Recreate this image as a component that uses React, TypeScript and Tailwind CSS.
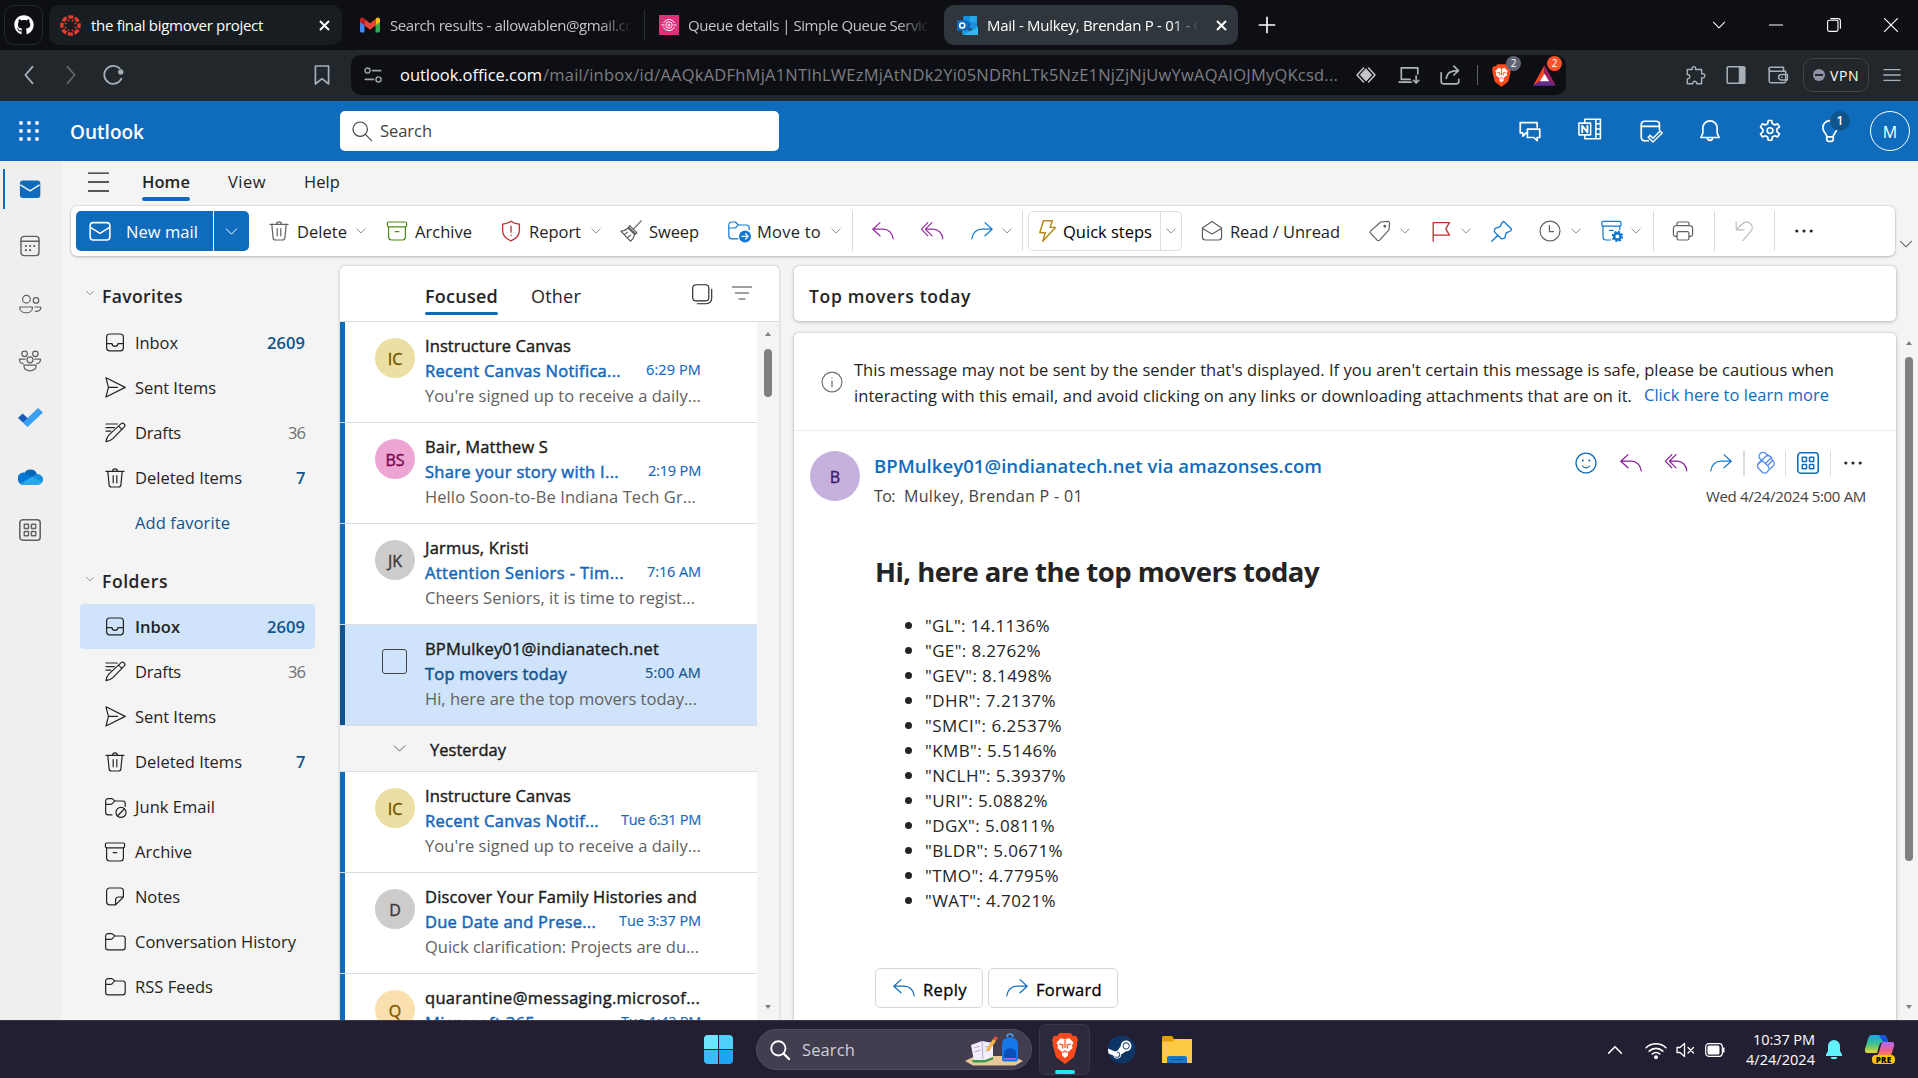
import React, { useLayoutEffect, useRef } from "react";
import { FaGithub, FaSteam } from "react-icons/fa";

/* Single-line label that spreads its letters over the width of its box. */
function T({ className = "", children }: { className?: string; children: string }) {
  const box = useRef<HTMLDivElement>(null);
  const inner = useRef<HTMLSpanElement>(null);
  useLayoutEffect(() => {
    const b = box.current;
    const s = inner.current;
    if (!b || !s) return;
    s.style.letterSpacing = "0px";
    const natural = s.getBoundingClientRect().width;
    s.style.letterSpacing = `${(b.clientWidth - natural) / children.length}px`;
  }, [children]);
  return (
    <div ref={box} className={`shrink-0 whitespace-nowrap ${className}`}>
      <span ref={inner} className="whitespace-pre">{children}</span>
    </div>
  );
}

type P = { className?: string; children?: React.ReactNode };

/* 20-unit line icon */
function I({ className = "size-6", children }: P) {
  return (
    <svg viewBox="0 0 20 20" fill="none" stroke="currentColor" strokeWidth="1" strokeLinecap="round" strokeLinejoin="round" className={`shrink-0 ${className}`}>
      {children}
    </svg>
  );
}

const Chev = ({ className = "size-3.5 text-[#707070]" }: P) => (
  <I className={className}><path d="M3 6.5 10 13.5 17 6.5" strokeWidth="1.3" /></I>
);
const Trash = ({ className }: P) => (
  <I className={className}><path d="M2.5 4.5h15M4 4.5l1.1 11.2a2 2 0 0 0 2 1.8h5.8a2 2 0 0 0 2-1.8L16 4.5M8 4.4a2 2 0 0 1 4 0M8.5 8v6M11.500 8v6" /></I>
);
const Archive = ({ className }: P) => (
  <I className={className}><rect x="2" y="2.500" width="16" height="4" rx="1" /><path d="M3 6.500v8.500a2.500 2.500 0 0 0 2.500 2.500h9a2.500 2.500 0 0 0 2.500-2.500V6.500M8.500 10.500h3" /></I>
);
const Inbox = ({ className }: P) => (
  <I className={className}><rect x="3" y="2.500" width="14" height="14" rx="2.500" /><path d="M3 10.500h4.500c0 1.400 1 2.300 2.500 2.300s2.500-.9 2.500-2.300H17" /></I>
);
const Send = ({ className }: P) => (
  <I className={className}><path d="M2.500 1.500 18.500 9.500 2.500 17.500 4.500 9.500ZM4.500 9.500H12" /></I>
);
const Drafts = ({ className }: P) => (
  <I className={className}><path d="M2.500 2.500h9.500M2.500 5.500h7M2.500 8.500h4M14.900 2.400a1.900 1.900 0 0 1 2.700 2.700L8 14.900c-1.500 1.400-3.300 1.900-5.500 2.300.4-2.200 1-4 2.300-5.400ZM13 4.300l2.700 2.700" /></I>
);
const Folder = ({ className }: P) => (
  <I className={className}><path d="M2.200 5a2 2 0 0 1 2-2H7.500L10 5H16.500a2 2 0 0 1 2 2v7.500a2 2 0 0 1-2 2H4.200a2 2 0 0 1-2-2ZM2.200 7.800H6.500C8.300 7.800 8.300 5.500 10 5" /></I>
);
const Junk = ({ className }: P) => (
  <I className={className}><path d="M7.500 16.500H4.200a2 2 0 0 1-2-2V5a2 2 0 0 1 2-2H7.500L10 5H16.500a2 2 0 0 1 2 2V9.500M2.200 7.800H6.500C8.300 7.800 8.300 5.500 10 5" /><circle cx="15" cy="14.500" r="4.200" /><path d="m12.200 17.300 5.600-5.600" /></I>
);
const Note = ({ className }: P) => (
  <I className={className}><path d="M17 10V5a2.500 2.500 0 0 0-2.500-2.500h-9A2.500 2.500 0 0 0 3 5v9a2.500 2.500 0 0 0 2.500 2.500H10.500L17 10h-4a2.500 2.500 0 0 0-2.500 2.500v4" /></I>
);
const ReplyI = ({ className }: P) => (
  <I className={className}><path d="M7.500 3 1.500 8.500l6 5.500M1.500 8.500H10c4.500 0 8 3 8.500 8" /></I>
);
const ReplyAll = ({ className }: P) => (
  <I className={className}><path d="M6.500 3 1.200 8.500l5.300 5.500M10 3 4.500 8.500 10 14M4.500 8.500H11c4 0 7.500 3 8 8" /></I>
);
const ForwardI = ({ className }: P) => (
  <I className={className}><path d="m12.500 3 6 5.500-6 5.500M18.500 8.500H10c-4.500 0-8 3-8.500 8" /></I>
);
const Apps = ({ className }: P) => (
  <I className={className}>
    <rect x="1.500" y="1.500" width="17" height="17" rx="2.500" strokeWidth="1.300" />
    {[[5.2, 5.2], [11.2, 5.2], [5.2, 11.200], [11.2, 11.2]].map(([x, y]) => (
      <rect key={`${x}-${y}`} x={x} y={y} width="3.600" height="3.600" rx=".5" strokeWidth="1.200" />
    ))}
  </I>
);
const Dots = ({ className }: P) => (
  <I className={className}><g fill="currentColor" stroke="none"><circle cx="4" cy="10" r="1.300" /><circle cx="10" cy="10" r="1.300" /><circle cx="16" cy="10" r="1.300" /></g></I>
);
const Cross = ({ className }: P) => (
  <I className={className}><path d="m4 4 12 12M16 4 4 16" strokeWidth="2.600" strokeLinecap="butt" /></I>
);
const Brave = ({ className }: P) => (
  <svg viewBox="0 0 26 31" className={`shrink-0 ${className}`}>
    <path d="M7.500 0h11l2.500 3 3-.3L26 7l-1 3 .3 2L22 24l-7 5.500-2 1.500-2-1.500L4 24 .7 12 1 10 0 7l2-4.300 3 .3Z" fill="#fb4a1e" />
    <path d="m13 6.500 4-1.500 4.500 4.500-1.500 3 .5 2.500-4.500 4v3.500L13 25l-3-2.500V19l-4.500-4 .5-2.500L4.500 9.500 9 5Z" fill="#fff" />
    <path d="m7 11 4 1-.5 3.500M19 11l-4 1 .5 3.500M10.500 19.500 13 18l2.500 1.500M13 7v8" stroke="#fb4a1e" fill="none" strokeWidth="1.200" />
  </svg>
);

const Sep = ({ className = "" }: P) => <div className={`h-10 w-px shrink-0 bg-[#d9d9d9] ${className}`} />;

function BrowserTabs() {
  return (
    <div className="flex h-[50px] shrink-0 items-center bg-[#0d0f14] pl-1 text-[15px] text-white">
      <div className="flex h-10 w-[39px] items-center justify-center rounded-[10px] border border-[#24282c]"><FaGithub className="size-5" /></div>
      <div className="ml-1.5 flex h-10 w-[293px] items-center rounded-[10px] bg-[#171d20] pl-[11px]">
        <svg viewBox="0 0 20 20" className="size-[21px] shrink-0">
          <circle cx="10" cy="10" r="8.200" fill="none" stroke="#e63d2e" strokeWidth="3.200" strokeDasharray="4.840 1.600" strokeDashoffset="2.400" />
          {[0, 45, 90, 135, 180, 225, 270, 315].map((a) => <circle key={a} cx="10" cy="4.900" r=".9" fill="#e63d2e" transform={`rotate(${a + 22.5} 10 10)`} />)}
        </svg>
        <T className="ml-2.5 w-[172px]">the final bigmover project</T>
        <Cross className="ml-[54px] size-[15px]" />
      </div>
      <svg viewBox="0 0 20 15" className="ml-[18px] h-4 w-5 shrink-0">
        <path d="M0 2v11.500A1.500 1.500 0 0 0 1.500 15H4.500V7Z" fill="#4285f4" />
        <path d="M20 2v11.500a1.500 1.500 0 0 1-1.500 1.500H15.500V7Z" fill="#34a853" />
        <path d="M15.500 1.500V8L20 4.500V2.200C20 .3 18-.6 16.500.6Z" fill="#fbbc04" />
        <path d="M4.500 1.500 10 5.800l5.500-4.300V8L10 12.200 4.500 8Z" fill="#ea4335" />
        <path d="M0 2.200V4.500L4.500 8V1.500L3.500.6C2-.6 0 .3 0 2.200Z" fill="#c5221f" />
      </svg>
      <div className="ml-2.5 w-[244px] [mask-image:linear-gradient(90deg,#000_86%,transparent_99%)]"><T className="w-[244px] text-[#c3c4c6]">Search results - allowablen@gmail.co</T></div>
      <div className="ml-2.5 h-[30px] w-px bg-[#2b2f34]" />
      <svg viewBox="0 0 20 20" className="ml-3.5 size-5 shrink-0" fill="none" stroke="#fff">
        <path fill="#e2307a" stroke="none" d="M0 0h20v20H0z" /><path d="M4.500 8a6 6 0 0 1 11 0M4.500 12a6 6 0 0 0 11 0M2.500 10h3M14.500 10h3" /><circle cx="10" cy="10" r="3.200" /><path d="M8.500 10h3M10 8.500v3" />
      </svg>
      <div className="ml-[9px] w-[244px] [mask-image:linear-gradient(90deg,#000_86%,transparent_99%)]"><T className="w-[248px] text-[#c3c4c6]">Queue details | Simple Queue Service</T></div>
      <div className="ml-3 flex h-10 w-[294px] items-center rounded-[10px] bg-[#2f373c] pl-[13px]">
        <svg viewBox="0 0 20 20" className="size-[21px] shrink-0">
          <path fill="#1490df" d="M6 1h13v12H6z" /><path fill="#28a8ea" d="M12.500 1H19v6h-6.500z" /><path fill="#0364b8" d="M6 7h6.500v6H6z" /><path fill="#1c8fe0" d="M12.500 7H19v6h-6.500z" /><path fill="#1b9de2" d="M5 11 12.500 15 20 10.500V19H6.500A1.500 1.500 0 0 1 5 17.500Z" /><path d="m6 19 14-7v7Z" fill="#35b8f1" />
          <rect y="5" width="10" height="10" rx="1" fill="#0f6cbd" /><circle cx="5" cy="10" r="2.400" fill="none" stroke="#fff" strokeWidth="1.500" />
        </svg>
        <div className="ml-[9px] w-[214px] [mask-image:linear-gradient(90deg,#000_86%,transparent_99%)]"><T className="w-[218px]">Mail - Mulkey, Brendan P - 01 - O</T></div>
        <Cross className="ml-[13px] size-[15px]" />
      </div>
      <I className="ml-5 size-[18px]"><path d="M10 1.500v17M1.500 10h17" strokeWidth="1.800" /></I>
      <Chev className="ml-[435px] size-4" />
      <I className="ml-[42px] size-[14px]"><path d="M0 10h20" strokeWidth="1.500" /></I>
      <I className="ml-[43px] size-4"><rect x="2" y="4" width="13" height="14" rx="2" strokeWidth="1.400" /><path d="M6 2h9a3 3 0 0 1 3 3v9" strokeWidth="1.400" /></I>
      <I className="ml-[41px] size-4"><path d="m2 2 16 16M18 2 2 18" strokeWidth="1.500" /></I>
    </div>
  );
}

function AddressBar() {
  return (
    <div className="flex h-[51px] shrink-0 items-center bg-[#22272b] pb-px pl-[17px] text-[#a5b0b8]">
      <I className="size-6"><path d="M13 3 7 10l6 7" strokeWidth="1.500" /></I>
      <I className="ml-[18px] size-6 text-[#5d666c]"><path d="m7 3 6 7-6 7" strokeWidth="1.500" /></I>
      <I className="ml-[18px] size-6"><path d="M15.500 4.500a7.500 7.500 0 1 0 1.500 8.500" strokeWidth="1.500" /><circle cx="16.500" cy="7.500" r="1.700" fill="currentColor" /></I>
      <I className="ml-[185px] size-6"><path d="M4.500 2.500h11v15L10 13l-5.500 4.500Z" strokeWidth="1.400" /></I>
      <div className="ml-[17px] flex h-10 w-[1215px] shrink-0 items-center rounded-[10px] bg-[#0d0f14] pl-[11px]">
        <I className="size-[22px] text-[#9fa3a8]"><circle cx="5" cy="6" r="2.300" strokeWidth="1.300" /><path d="M9.500 6H17M3 14h7.500" strokeWidth="1.500" /><circle cx="15" cy="14" r="2.300" strokeWidth="1.300" /></I>
        <T className="ml-4 w-[142px] text-[16.5px] text-white">outlook.office.com</T>
        <T className="ml-px w-[795px] text-[16.5px] text-[#7c7e82]">/mail/inbox/id/AAQkADFhMjA1NTlhLWEzMjAtNDk2Yi05NDRhLTk5NzE1NjZjNjUwYwAQAIOJMyQKcsd...</T>
        <I className="ml-[18px] size-5 text-[#c4c6c9]"><path d="M7.500 3 1 10l6.500 7M12.500 3 19 10l-6.500 7" strokeWidth="1.500" /><path d="m10 4 5.500 6-5.500 6-5.500-6Z" fill="currentColor" /></I>
        <I className="ml-[22px] size-[22px] text-[#b0b3b7]"><path d="M18 9V3.500H3V14M1 16.500h11M3 14h8M16.500 11v6M14 14.800l2.500 2.500 2.500-2.500" strokeWidth="1.500" /></I>
        <I className="ml-[19px] size-[22px] text-[#b0b3b7]"><path d="M2 8v8a2 2 0 0 0 2 2h12a2 2 0 0 0 2-2v-2M6.500 13c.5-4.500 3-7 10.500-7M13.500 2l4.200 4-4.200 4" strokeWidth="1.500" /></I>
        <div className="ml-4 h-5 w-px bg-[#5d6167]" />
        <div className="relative ml-[13px] size-[22px]">
          <Brave className="ml-px h-[23px] w-[19px]" />
          <div className="absolute -top-2 left-[15px] flex size-[15px] items-center justify-center rounded-full bg-[#5f6476] text-[10px] text-white">2</div>
        </div>
        <div className="relative ml-5 size-[23px]">
          <svg viewBox="0 0 20 20" className="size-[23px]"><path d="M10 1 0 19l10-7Z" fill="#ff4724" /><path d="M10 1v11l10 7Z" fill="#9e1f63" /><path d="M0 19h20l-10-7Z" fill="#662d91" /><path d="m10 8.500 4 6.500H6Z" fill="#fff" /></svg>
          <div className="absolute -top-2 left-3.5 flex size-[15px] items-center justify-center rounded-full bg-[#fb542b] text-[10px] text-white">2</div>
        </div>
      </div>
      <I className="ml-[118px] size-[22px]"><path d="M3 5h4.500c-1-3.500 4-3.500 3 0H16v4c4-1 4 4.500 0 3.500V18h-4.500c.5-3-4-3-3.500 0H3v-4.500c3 .5 3-4.500 0-4Z" strokeWidth="1.300" /></I>
      <I className="ml-[19px] size-[22px]"><rect x="2" y="2.500" width="16" height="15" rx="1" strokeWidth="1.400" /><path d="M13 3h4.500v14H13z" fill="currentColor" /></I>
      <I className="ml-5 size-[22px]"><path d="M2 4.500v11A1.500 1.500 0 0 0 3.500 17h12a1.500 1.500 0 0 0 1.500-1.500V6.500H3.500a1.500 1.500 0 0 1 0-3.500H15v3" strokeWidth="1.400" /><path d="M18.500 9.500H13a2.500 2.500 0 0 0 0 5h5.500Z" strokeWidth="1.400" /><path d="M13 12h1" /></I>
      <div className="ml-3.5 flex h-[34px] w-[66px] shrink-0 items-center rounded-[10px] border border-[#3d464c] pl-[9px]">
        <div className="flex size-3 items-center justify-center rounded-full bg-[#8f91a8]"><div className="h-0.5 w-2 bg-[#22272b]" /></div>
        <T className="ml-[5px] w-[29px] text-[14px] text-white">VPN</T>
      </div>
      <I className="ml-3.5 size-[18px]"><path d="M1 4h18M1 10h18M1 16h18" strokeWidth="1.500" /></I>
    </div>
  );
}

function SuiteHeader() {
  return (
    <div className="flex h-[60px] shrink-0 items-center bg-[#0f6cbd] pl-[19px] text-white">
      <svg viewBox="0 0 20 20" className="size-5 shrink-0" fill="currentColor">
        {[2, 10, 18].flatMap((x) => [2, 10, 18].map((y) => <circle key={`${x}-${y}`} cx={x} cy={y} r="1.900" />))}
      </svg>
      <T className="ml-[31px] mt-0.5 w-[74px] text-[19px] font-semibold">Outlook</T>
      <div className="ml-[196px] flex h-10 w-[439px] items-center rounded-[5px] bg-white pl-2.5 text-[#424242]">
        <I className="size-6"><circle cx="8.500" cy="8.500" r="6" /><path d="m13 13 5 5" /></I>
        <T className="ml-1.5 w-[52px] text-[16.5px]">Search</T>
      </div>
      <I className="ml-[738px] size-[26px]"><path d="M15.500 7V3.500h-13v8h2V14l2.500-2.500M8 8.500h9.500v6.500H15.500v2.500L13 15H8Z" strokeWidth="1.300" /></I>
      <I className="-mt-1 ml-[34px] size-[26px]"><path d="M6 5.500V2.500h12v15H6v-3M14.500 2.500v15M14.500 6H18M14.500 10H18M14.500 14H18" strokeWidth="1.200" /><rect x="1.500" y="5.500" width="9" height="9" strokeWidth="1.200" fill="#0f6cbd" /><path d="M4 12.500v-5l4 5v-5" strokeWidth="1.500" /></I>
      <I className="ml-[35px] size-[26px]"><path d="M8 17.500H5A2.500 2.500 0 0 1 2.500 15V5A2.500 2.500 0 0 1 5 2.500h9A2.500 2.500 0 0 1 16.500 5v4M2.500 6.500h14" strokeWidth="1.300" /><path d="M7.800 14.800 9.300 13.300 11.500 15.500 17 10l1.600 1.500-7.100 7Z" strokeWidth="1.100" /></I>
      <I className="ml-[33px] size-[26px]"><path d="M10 2.200a5.500 5.500 0 0 0-5.500 5.500v4L3 15h14l-1.500-3.300v-4A5.500 5.500 0 0 0 10 2.200ZM8 15.200a2 2 0 0 0 4 0" strokeWidth="1.300" /></I>
      <I className="ml-[34px] size-[26px]"><path d="M8.700 1.900h2.600l.5 2.400 1.800 1 2.300-.8 1.400 2.300-1.900 1.600v2.200l1.900 1.600-1.400 2.300-2.300-.8-1.800 1-.5 2.400H8.700l-.5-2.400-1.800-1-2.300.8-1.400-2.300 1.900-1.600V9l-1.900-2.200L4.100 4.500l2.300.8 1.800-1Z" strokeWidth="1.300" /><circle cx="10" cy="9.700" r="2.200" strokeWidth="1.300" /></I>
      <div className="relative ml-[34px] size-[26px]">
        <I className="size-[26px]"><path d="M7.500 14c0-2-3-3-3-6.500a5.500 5.500 0 0 1 11 0c0 3.500-3 4.500-3 6.500v2.500a1.500 1.500 0 0 1-1.500 1.500H9a1.500 1.500 0 0 1-1.500-1.500ZM7.500 14.500h5" strokeWidth="1.300" /></I>
        <div className="absolute -top-[7px] left-[13px] flex size-5 items-center justify-center rounded-full bg-[#0f548c] text-[12px] font-semibold">1</div>
      </div>
      <div className="ml-[27px] flex size-10 shrink-0 items-center justify-center rounded-full border border-white pt-0.5 text-[16px]">M</div>
    </div>
  );
}

function Rail() {
  return (
    <div className="flex w-[61px] shrink-0 flex-col items-center bg-[#efefef] pr-px text-[#616161]">
      <div className="relative flex h-14 w-full items-center justify-center">
        <div className="absolute left-[3px] h-10 w-0.5 bg-[#0f6cbd]" />
        <svg viewBox="0 0 20 20" className="size-6"><rect x="1.600" y="3" width="17" height="14.500" rx="2.500" fill="#0f6cbd" /><path d="m2 6.500 8 5 8-5" fill="none" stroke="#efefef" strokeWidth="1.300" /></svg>
      </div>
      <div className="flex h-[58px] items-center"><I className="size-6"><rect x="2.500" y="2" width="15" height="16" rx="2.500" strokeWidth="1.200" /><path d="M2.500 6h15" strokeWidth="1.200" /><path d="M6.500 10h.1M10 10h.1M13.500 10h.1M6.500 13.500h.1M10 13.500h.1" strokeWidth="1.800" /></I></div>
      <div className="flex h-[57px] items-center"><I className="size-6"><circle cx="7" cy="6" r="3.200" /><circle cx="15" cy="7" r="2.300" /><path d="M1.500 12.500h10.500v1c0 2.500-2.500 3.800-5.200 3.800s-5.300-1.300-5.300-3.800ZM14 12.500h5v.8c0 1.900-2 3-4.500 2.800" /></I></div>
      <div className="flex h-[58px] items-center"><I className="size-6"><circle cx="5.500" cy="4" r="2.300" /><circle cx="14.500" cy="4" r="2.300" /><circle cx="10" cy="9" r="2.500" /><path d="M5 13.500h10v1c0 2.200-2.400 3.700-5 3.700s-5-1.500-5-3.700ZM6 8.500H1.200c0 2 1 3.500 3.300 3.800M14 8.500h4.800c0 2-1 3.500-3.300 3.800" /></I></div>
      <div className="flex h-14 items-center"><svg viewBox="0 0 25 20" className="h-5 w-[25px]"><path d="m0 10 4.500-4.500L14 14l-4.500 4.500Z" fill="#185abd" /><path d="M9.500 19 5 14.500 20 0l5 4.500Z" fill="#3aa0f0" /></svg></div>
      <div className="flex h-[60px] items-center"><svg viewBox="0 0 25 17" className="h-[17px] w-[25px]"><path d="M6 6a7 7 0 0 1 13 0l-6 5Z" fill="#0364b8" /><path d="M0 11.500A5.500 5.500 0 0 1 9 6l7 5-12 6C1.500 16 0 14 0 11.500Z" fill="#0078d4" /><path d="M13 9.500 19 6a5.400 5.400 0 0 1 5 8.500Z" fill="#1490df" /><path d="M2.500 15.500 14.500 8.500 24.200 14.500a5 5 0 0 1-4.200 2.500H5.500c-1 0-2-.5-3-1.500Z" fill="#28a8ea" /></svg></div>
      <div className="flex h-12 items-center"><Apps className="size-6" /></div>
    </div>
  );
}

function Ribbon() {
  const t = "mt-0.5 text-[16.5px]";
  return (
    <>
      <div className="flex h-[45px] shrink-0 items-center pl-[27px] text-[16.5px] text-[#242424]">
        <I className="mb-1 size-[21px]"><path d="M0 2h20M0 10.500h20M0 19h20" strokeWidth="1.300" /></I>
        <div className="ml-[33px] mt-1 w-12"><T className="w-12 font-semibold">Home</T><div className="mt-0.5 h-1 rounded-full bg-[#0f6cbd]" /></div>
        <T className="mb-0.5 ml-[38px] w-[38px]">View</T>
        <T className="mb-0.5 ml-[38px] w-[36px]">Help</T>
      </div>
      <div className="flex h-[60px] shrink-0 items-start">
        <div className="ml-[10px] flex h-[50px] w-[1824px] shrink-0 items-center rounded-md bg-white pl-[5px] text-[#242424] shadow-[0_0_2px_rgba(0,0,0,.2),0_1px_3px_rgba(0,0,0,.2)]">
          <div className="flex h-10 w-[173px] shrink-0 items-center rounded-[5px] bg-[#0f6cbd] text-white">
            <I className="ml-3 size-6"><rect x="1.800" y="3" width="16.400" height="14.500" rx="2.500" strokeWidth="1.300" /><path d="m2 7 8 5 8-5" strokeWidth="1.300" /></I>
            <T className={`ml-3.5 w-[72px] ${t}`}>New mail</T>
            <div className="ml-[15px] h-10 w-px bg-white" />
            <Chev className="ml-[10px] size-[15px]" />
          </div>
          <Trash className="ml-[18px] size-6 text-[#616161]" /><T className={`ml-1.5 w-[50px] ${t}`}>Delete</T><Chev className="ml-2 size-3 text-[#707070]" />
          <Archive className="ml-[18px] size-6 text-[#4a8b10]" /><T className={`ml-1.5 w-[57px] ${t}`}>Archive</T>
          <I className="ml-[27px] size-6 text-[#bc2f32]"><path d="M10 1.800c2 1.500 4.500 2.300 7 2.500v5c0 4-2.500 7-7 8.900-4.500-1.900-7-4.900-7-8.900v-5c2.500-.2 5-1 7-2.500ZM10 6v5M10 13.500v.3" strokeWidth="1.100" /></I>
          <T className={`ml-1.5 w-[52px] ${t}`}>Report</T><Chev className="ml-[9px] size-3 text-[#707070]" />
          <I className="ml-[17px] size-6 text-[#616161]"><path d="m18.500 1.500-6.500 7M8 6.500l6 6M9 5.500l6 6-2 1.500L7.500 7.500ZM7.500 7.500C6 9 4 10 1.500 10L9.500 18.500c1.500-1 3-3 3.500-5.500M4.500 13 7 11M7 15.500l2.500-2" /></I>
          <T className={`ml-1.5 w-[50px] ${t}`}>Sweep</T>
          <I className="ml-7 size-6 text-[#1078d4]"><path d="M9 16.500H4a2.500 2.500 0 0 1-2.500-2.500V5A2.500 2.500 0 0 1 4 2.500h3L9.500 5H16a2.500 2.500 0 0 1 2.500 2.500V9M1.500 7.500H6.500C8 7.500 8 5.500 9.500 5" /><circle cx="15" cy="14.500" r="5" fill="currentColor" stroke="none" /><path d="M12.500 14.500h5M15.500 12.300l2.200 2.200-2.200 2.200" stroke="#fff" /></I>
          <T className={`ml-1.5 w-16 ${t}`}>Move to</T><Chev className="ml-[9px] size-3 text-[#707070]" />
          <Sep className="ml-[10px]" />
          <ReplyI className="ml-[18px] size-6 text-[#962b9e]" />
          <ReplyAll className="ml-[25px] size-6 text-[#962b9e]" />
          <ForwardI className="ml-[26px] size-6 text-[#1078d4]" /><Chev className="ml-[7px] size-3 text-[#707070]" />
          <Sep className="ml-[9px]" />
          <div className="ml-[5px] flex h-10 w-[154px] shrink-0 items-center rounded-[5px] border border-[#e0e0e0]">
            <I className="ml-1.5 size-6 text-[#b58a1a]"><path d="M7 1.500h7.500L12.500 7H17L6.500 18.500 8.500 11.500H4Z" strokeWidth="1.200" /></I>
            <T className={`ml-1 w-[89px] text-black ${t}`}>Quick steps</T>
            <div className="ml-2 h-full w-px bg-[#e0e0e0]" />
            <Chev className="ml-1 size-3 text-[#707070]" />
          </div>
          <I className="ml-[18px] size-6 text-[#616161]"><path d="m2 7.500 8-5.500 8 5.500v7.500a2.500 2.500 0 0 1-2.500 2.500h-11A2.500 2.500 0 0 1 2 15ZM2 8l8 4.500L18 8" /></I>
          <T className={`ml-1.5 w-[110px] ${t}`}>Read / Unread</T>
          <I className="ml-7 size-6 text-[#616161]"><path d="M10.500 2.500 17 2l1 .8-.5 6.200-7.800 8.600a1.500 1.500 0 0 1-2.100 0L2.300 12a1.500 1.500 0 0 1 0-2.100Z" /><circle cx="14" cy="6" r=".7" fill="currentColor" /></I>
          <Chev className="ml-[7px] size-3 text-[#707070]" />
          <I className="ml-[18px] size-6 text-[#bc2f32]"><path d="M3.500 18.500V3H17l-3 5.200 3 5.300H3.500" strokeWidth="1.100" /></I>
          <Chev className="ml-[7px] size-3 text-[#707070]" />
          <I className="ml-[18px] size-6 text-[#1078d4]"><path d="m11.500 2 6.500 6.500-.8 1.500-3.700 1.500-1.200 4.500L9.500 16.500 3.500 10.500l.7-2.700 4.300-1.500L10.200 2.800ZM6.500 13.500l-5 5" strokeWidth="1.100" /></I>
          <I className="ml-6 size-6 text-[#616161]"><circle cx="10" cy="10" r="8.300" /><path d="M9.500 5.500v5h3.500" /></I>
          <Chev className="ml-[8px] size-3 text-[#707070]" />
          <I className="ml-[18px] size-6 text-[#1078d4]"><rect x="1.500" y="2" width="16" height="4" rx="1" /><path d="M2.500 6v9A2.500 2.500 0 0 0 5 17.500h4M16.500 6v3M8 9.500h3" /><circle cx="14.500" cy="14.500" r="2.700" strokeWidth="2.200" /><circle cx="14.500" cy="14.500" r="4" strokeDasharray="1.640 1.500" strokeWidth="1.500" strokeLinecap="butt" /></I>
          <Chev className="ml-1.5 size-3 text-[#707070]" />
          <Sep className="ml-[11px]" />
          <I className="ml-[17px] size-6 text-[#616161]"><path d="M5 5.500V3.500a1 1 0 0 1 1-1h8a1 1 0 0 1 1 1v2M5 14.500H3.500a1.500 1.500 0 0 1-1.500-1.500V8A2.500 2.500 0 0 1 4.500 5.500h11A2.500 2.500 0 0 1 18 8v5a1.500 1.500 0 0 1-1.500 1.500H15" /><rect x="5" y="10.500" width="10" height="7" rx="1.500" /></I>
          <Sep className="ml-[19px]" />
          <I className="ml-[17px] size-6 text-[#bdbdbd]"><path d="M3.500 2.500v6.500H10M3.500 9l5-4.800c5-4.700 11 1.500 7 6.300L9 18" /></I>
          <Sep className="ml-[18px]" />
          <Dots className="ml-[17px] size-6 text-[#242424]" />
        </div>
        <Chev className="ml-[3px] mt-[30px] size-4 text-[#616161]" />
      </div>
    </>
  );
}

type FRow = { icon: React.FC<P>; label: React.ReactElement; count?: React.ReactElement; sel?: boolean };

const big = <T className="w-[38px] font-semibold text-[#0f548c]">2609</T>;
const seven = <T className="w-[9px] font-semibold text-[#0f548c]">7</T>;
const gray36 = <T className="w-[17px] text-[#707070]">36</T>;

const favorites: FRow[] = [
  { icon: Inbox, label: <T className="w-[43px]">Inbox</T>, count: big },
  { icon: Send, label: <T className="w-[81px]">Sent Items</T> },
  { icon: Drafts, label: <T className="w-[46px]">Drafts</T>, count: gray36 },
  { icon: Trash, label: <T className="w-[107px]">Deleted Items</T>, count: seven },
];
const folders: FRow[] = [
  { icon: Inbox, label: <T className="w-[45px] font-semibold">Inbox</T>, count: big, sel: true },
  { icon: Drafts, label: <T className="w-[46px]">Drafts</T>, count: gray36 },
  { icon: Send, label: <T className="w-[81px]">Sent Items</T> },
  { icon: Trash, label: <T className="w-[107px]">Deleted Items</T>, count: seven },
  { icon: Junk, label: <T className="w-[80px]">Junk Email</T> },
  { icon: Archive, label: <T className="w-[57px]">Archive</T> },
  { icon: Note, label: <T className="w-[45px]">Notes</T> },
  { icon: Folder, label: <T className="w-[161px]">Conversation History</T> },
  { icon: Folder, label: <T className="w-[78px]">RSS Feeds</T> },
];

function FolderRow({ icon: Icon, label, count, sel }: FRow) {
  return (
    <div className={`ml-[19px] flex h-[45px] w-[235px] shrink-0 items-center rounded pl-[23px] pr-2.5 ${sel ? "bg-[#cfe3fb]" : ""}`}>
      <Icon className="size-6" />
      <div className="ml-2 mt-px flex-1">{label}</div>
      <div className="mt-px">{count}</div>
    </div>
  );
}

function FolderPane() {
  return (
    <div className="flex w-[279px] shrink-0 flex-col overflow-hidden text-[16.5px] text-[#242424]">
      <div className="mt-1 flex h-[50px] shrink-0 items-center pl-6">
        <Chev className="mb-1 size-2.5 text-[#616161]" /><T className="ml-[7px] mt-0.5 w-[81px] text-[17.5px] font-semibold">Favorites</T>
      </div>
      {favorites.map((r, i) => <FolderRow key={i} {...r} />)}
      <div className="flex h-[45px] shrink-0 items-center pl-[74px]"><T className="mt-0.5 w-[95px] text-[#0f548c]">Add favorite</T></div>
      <div className="mt-3.5 flex h-[45px] shrink-0 items-center pl-6">
        <Chev className="mb-1.5 size-2.5 text-[#616161]" /><T className="ml-[7px] w-[66px] text-[17.5px] font-semibold">Folders</T>
      </div>
      {folders.map((r, i) => <FolderRow key={i} {...r} />)}
    </div>
  );
}

function Mail({ av, avc, from, sub, time, body, sel }: { av: string; avc: string; from: React.ReactElement; sub: React.ReactElement; time: React.ReactElement; body: React.ReactElement; sel?: boolean }) {
  return (
    <div className={`flex h-[101px] w-[417px] shrink-0 border-b border-[#dcdcdc] ${sel ? "bg-[#cfe3fb]" : "bg-white"}`}>
      <div className={`h-[100px] w-[5px] shrink-0 ${sel ? "bg-[#0f548c]" : "bg-[#0f6cbd]"}`} />
      {sel ? (
        <div className="ml-[37px] mr-[18px] mt-6 size-[25px] shrink-0 rounded-[3px] border border-[#424242]" />
      ) : (
        <div className={`ml-[30px] mr-2.5 mt-4 flex size-10 shrink-0 items-center justify-center rounded-full pt-0.5 text-[16px] [-webkit-text-stroke:.4px_currentColor] ${avc}`}>{av}</div>
      )}
      <div className="w-[276px] shrink-0 pt-[11px] text-[16.5px] leading-[25px]">
        <div className="text-[#1b1b1b] [-webkit-text-stroke:.4px_currentColor]">{from}</div>
        <div className={`flex items-center justify-between ${sel ? "text-[#0f548c]" : "text-[#1467bd]"}`}><div className="[-webkit-text-stroke:.5px_currentColor]">{sub}</div><div className="-mt-0.5 text-[14.5px] [-webkit-text-stroke:.15px_currentColor]">{time}</div></div>
        <div className="text-[#616161]">{body}</div>
      </div>
    </div>
  );
}

function MessageList() {
  return (
    <div className="flex w-[439px] shrink-0 flex-col overflow-hidden rounded-t-[5px] bg-white shadow-[0_0_3px_rgba(0,0,0,.25)]">
      <div className="flex h-14 shrink-0 border-b border-[#dcdcdc] pl-[85px] pt-[18px] text-[18px] leading-6 text-[#242424]">
        <div className="w-[73px]"><T className="w-[73px] font-semibold">Focused</T><div className="mt-1 h-[3px] rounded bg-[#0f6cbd]" /></div>
        <T className="ml-[33px] w-[50px]">Other</T>
        <I className="-mt-px ml-[110px] size-[23px]"><rect x="1.500" y="1.500" width="14" height="14" rx="3" /><path d="M5.500 18h8a4.500 4.500 0 0 0 4.500-4.500V5.500" /></I>
        <I className="-mt-[3px] ml-4 size-6 text-[#424242]"><path d="M2 5h16M4.500 10h11M7.500 15h5" /></I>
      </div>
      <div className="flex min-h-0 flex-1">
        <div className="flex w-[417px] flex-col overflow-hidden bg-[#f4f4f4]">
          <Mail av="IC" avc="bg-[#ebdfa4] text-[#6d5700]" from={<T className="w-[146px]">Instructure Canvas</T>} sub={<T className="w-[196px]">Recent Canvas Notifica...</T>} time={<T className="w-[55px]">6:29 PM</T>} body={<T className="w-[276px]">You're signed up to receive a daily...</T>} />
          <Mail av="BS" avc="bg-[#eda5d3] text-[#7a0952]" from={<T className="w-[123px]">Bair, Matthew S</T>} sub={<T className="w-[194px]">Share your story with I...</T>} time={<T className="w-[53px]">2:19 PM</T>} body={<T className="w-[271px]">Hello Soon-to-Be Indiana Tech Gr...</T>} />
          <Mail av="JK" avc="bg-[#cecccb] text-[#3b3a39]" from={<T className="w-[104px]">Jarmus, Kristi</T>} sub={<T className="w-[199px]">Attention Seniors - Tim...</T>} time={<T className="w-[54px]">7:16 AM</T>} body={<T className="w-[270px]">Cheers Seniors, it is time to regist...</T>} />
          <Mail sel av="" avc="" from={<T className="w-[234px]">BPMulkey01@indianatech.net</T>} sub={<T className="w-[142px]">Top movers today</T>} time={<T className="w-[56px]">5:00 AM</T>} body={<T className="w-[272px]">Hi, here are the top movers today...</T>} />
          <div className="flex h-[46px] shrink-0 items-center border-b border-[#dcdcdc] bg-[#f4f4f4]">
            <Chev className="ml-[52px] size-[15px] text-[#616161]" />
            <T className="ml-[23px] mt-[3px] w-[76px] text-[16.5px] text-[#1b1b1b] [-webkit-text-stroke:.4px_currentColor]">Yesterday</T>
          </div>
          <Mail av="IC" avc="bg-[#ebdfa4] text-[#6d5700]" from={<T className="w-[146px]">Instructure Canvas</T>} sub={<T className="w-[174px]">Recent Canvas Notif...</T>} time={<T className="w-[80px]">Tue 6:31 PM</T>} body={<T className="w-[276px]">You're signed up to receive a daily...</T>} />
          <Mail av="D" avc="bg-[#cecccb] text-[#3b3a39]" from={<T className="w-[272px]">Discover Your Family Histories and</T>} sub={<T className="w-[171px]">Due Date and Prese...</T>} time={<T className="w-[82px]">Tue 3:37 PM</T>} body={<T className="w-[274px]">Quick clarification: Projects are du...</T>} />
          <Mail av="Q" avc="bg-[#fae0ae] text-[#835b00]" from={<T className="w-[275px]">quarantine@messaging.microsof...</T>} sub={<T className="w-[110px]">Microsoft 365</T>} time={<T className="w-[80px]">Tue 1:42 PM</T>} body={<span />} />
        </div>
        <div className="flex w-[22px] flex-col items-center bg-[#f4f4f4]">
          <div className="mt-2.5 size-0 border-x-[3.5px] border-b-4 border-x-transparent border-b-[#808080]" />
          <div className="mt-[13px] h-12 w-2 rounded-full bg-[#808080]" />
          <div className="mb-[11px] mt-auto size-0 border-x-[3.5px] border-t-4 border-x-transparent border-t-[#808080]" />
        </div>
      </div>
    </div>
  );
}

const movers = [
  <T className="w-[125px]">"GL": 14.1136%</T>,
  <T className="w-[116px]">"GE": 8.2762%</T>,
  <T className="w-[127px]">"GEV": 8.1498%</T>,
  <T className="w-[131px]">"DHR": 7.2137%</T>,
  <T className="w-[137px]">"SMCI": 6.2537%</T>,
  <T className="w-[132px]">"KMB": 5.5146%</T>,
  <T className="w-[141px]">"NCLH": 5.3937%</T>,
  <T className="w-[123px]">"URI": 5.0882%</T>,
  <T className="w-[130px]">"DGX": 5.0811%</T>,
  <T className="w-[138px]">"BLDR": 5.0671%</T>,
  <T className="w-[134px]">"TMO": 4.7795%</T>,
  <T className="w-[131px]">"WAT": 4.7021%</T>,
];

function Reading() {
  const card = "bg-white shadow-[0_0_2px_rgba(0,0,0,.2),0_1px_4px_rgba(0,0,0,.2)]";
  return (
    <div className="ml-[15px] flex w-[1102px] shrink-0 flex-col text-[#242424]">
      <div className={`flex h-[55px] shrink-0 items-center rounded-[5px] pl-[15px] pt-1.5 ${card}`}><T className="w-[162px] text-[17.5px] font-semibold">Top movers today</T></div>
      <div className={`mt-3 flex min-h-0 flex-1 flex-col rounded-t-[5px] ${card}`}>
        <div className="flex h-[98px] shrink-0 items-center border-b border-[#ebebeb] pl-[26px]">
          <I className="mt-px size-6 text-[#707070]"><circle cx="10" cy="10" r="8.300" /><path d="M10 9v5M10 6.500v.2" /></I>
          <div className="ml-2.5 mt-0.5 text-[16.5px] leading-[26px]">
            <T className="w-[980px]">This message may not be sent by the sender that's displayed. If you aren't certain this message is safe, please be cautious when</T>
            <div className="flex"><T className="w-[778px]">interacting with this email, and avoid clicking on any links or downloading attachments that are on it.</T><T className="-mt-px ml-3 w-[185px] text-[#0f6cbd]">Click here to learn more</T></div>
          </div>
        </div>
        <div className="flex pl-4 pt-5">
          <div className="flex size-[50px] items-center justify-center rounded-full bg-[#c6b1de] pt-0.5 text-[16px] text-[#401b6c] [-webkit-text-stroke:.4px_currentColor]">B</div>
          <div className="ml-3.5 w-[448px]">
            <T className="w-[448px] text-[18.5px] font-semibold leading-[30px] text-[#0f6cbd]">BPMulkey01@indianatech.net via amazonses.com</T>
            <div className="flex text-[16px] leading-[30px] text-[#424242]"><T className="w-[21px]">To:</T><T className="ml-[9px] w-[179px]">Mulkey, Brendan P - 01</T></div>
          </div>
          <div className="ml-[252px] w-[305px]">
            <div className="flex h-6 items-center">
              <I className="size-6 text-[#0f6cbd]"><circle cx="10" cy="10" r="8.300" strokeWidth="1.100" /><path d="M7 12.500c1.500 2 4.500 2 6 0" /><path d="M7.300 8h.1M12.700 8h.1" strokeWidth="1.700" /></I>
              <ReplyI className="ml-[21px] size-6 text-[#881798]" /><ReplyAll className="ml-[21px] size-6 text-[#881798]" /><ForwardI className="ml-[21px] size-6 text-[#1078d4]" />
              <div className="ml-2.5 h-[25px] w-0.5 bg-[#dcdcdc]" />
              <I className="ml-2 size-6 text-[#5b8ff0]"><g transform="rotate(-45 10 10)" strokeWidth="1.200"><path d="M5 6.500h9a3 3 0 0 1 3 3v.500a3 3 0 0 1-3 3h-3" /><rect x="3" y="6.500" width="7" height="10" rx="3" /><path d="M10 6.500h-3.500M10 10.500h7M9.500 16.500h3.500a3 3 0 0 0 3-3v-.8" /><path d="M9.500 6.500V5a3.300 3.300 0 0 1 6.600 0v2.500" /></g></I>
              <div className="ml-2 h-[25px] w-px bg-[#dcdcdc]" />
              <Apps className="ml-2.5 size-6 text-[#0f6cbd]" />
              <div className="ml-2.5 h-[25px] w-px bg-[#dcdcdc]" />
              <Dots className="ml-2.5 size-6" />
            </div>
            <div className="mt-[9px] flex justify-end pr-[13px] text-[15px] leading-6 text-[#424242]"><T className="w-[160px]">Wed 4/24/2024 5:00 AM</T></div>
          </div>
        </div>
        <T className="ml-[81px] mt-[41px] w-[444px] text-[27.5px] font-bold leading-[40px]">Hi, here are the top movers today</T>
        <div className="ml-[111px] mt-[21px] text-[17px] leading-[25px]">
          {movers.map((m, i) => <div key={i} className="flex items-center"><div className="mr-[13px] size-[7px] rounded-full bg-[#242424]" />{m}</div>)}
        </div>
        <div className="ml-[81px] mt-[55px] flex gap-[5px] text-[16.5px] text-black [-webkit-text-stroke:.3px_currentColor]">
          <div className="flex h-10 w-[108px] items-center rounded-[5px] border border-[#d6d6d6] pl-4"><ReplyI className="size-6 text-[#0f6cbd]" /><T className="ml-[7px] mt-1 w-[44px]">Reply</T></div>
          <div className="flex h-10 w-[130px] items-center rounded-[5px] border border-[#d6d6d6] pl-4"><ForwardI className="size-6 text-[#0f6cbd]" /><T className="ml-[7px] mt-1 w-[66px]">Forward</T></div>
        </div>
      </div>
    </div>
  );
}

function Taskbar() {
  return (
    <div className="flex h-[58px] shrink-0 items-center border-t border-[#3b3848] bg-[#231f32] pl-[704px] text-white">
      <div className="grid size-[29px] shrink-0 grid-cols-2 gap-px">
        <div className="rounded-tl-sm bg-[#6fe4fb]" /><div className="rounded-tr-sm bg-[#4fd0f8]" /><div className="rounded-bl-sm bg-[#38bdf8]" /><div className="rounded-br-sm bg-[#1da4f5]" />
      </div>
      <div className="ml-[23px] flex h-[41px] w-[276px] shrink-0 items-center rounded-full border border-[#524e60] bg-[#423e50] pl-3">
        <I className="size-[22px]"><circle cx="8.500" cy="8.500" r="6.500" strokeWidth="1.700" /><path d="m13.300 13.300 5 5" strokeWidth="2" /></I>
        <T className="ml-[11px] mt-0.5 w-[53px] text-[16.5px] text-[#cfcdd6]">Search</T>
        <svg viewBox="0 0 58 34" className="ml-[110px] h-[34px] w-[58px] shrink-0">
          <path d="M0 28 10 23h38l10 5-8 4.500H8Z" fill="#e9c79a" />
          <path d="m6 12 11-4 11 2v14l-8 3-11 1Z" fill="#f4eefb" /><path d="m7 27 13 0 8-3v2.500L20 29.500H8Z" fill="#3a9a4c" /><path d="m17 8 1 18M9 15l6-2M9.500 19l6-2M20 14l5-1M20.500 18l5-1" stroke="#b9a9d8" fill="none" />
          <path d="M21 17 28 6l3 2-7 10Z" fill="#f7b64a" /><path d="m28 6 2-3 3 2-2 3Z" fill="#e8504a" />
          <path d="M37 11c0-9 16-9 16 0v15c0 2-1.500 2.500-3 2.500H40c-1.500 0-3-.5-3-2.500Z" fill="#1677e8" /><path d="M42 4c0-4 6-4 6 0" stroke="#4aa0f5" fill="none" strokeWidth="1.500" /><path d="M39 19c2-5 10-5 12 0v6H39Z" fill="#0b50b8" /><path d="M39 25h12v1.500H39z" fill="#a46bf0" />
        </svg>
      </div>
      <div className="relative ml-[7px] flex size-[51px] shrink-0 items-center justify-center rounded-md border border-[#3a3648] bg-[#2e2a3d]">
        <Brave className="mb-0.5 h-[31px] w-[26px]" />
        <div className="absolute bottom-0 h-1 w-5 rounded-full bg-[#26e6f5]" />
      </div>
      <div className="ml-[18px] flex size-[27px] shrink-0 items-center justify-center rounded-full bg-white"><FaSteam className="size-[29px] shrink-0 text-[#0d3566]" /></div>
      <svg viewBox="0 0 30 27" className="ml-[27px] h-[27px] w-[30px] shrink-0"><path d="M0 1.500A1.500 1.500 0 0 1 1.500 0H10l2 3h18v10H0Z" fill="#e0a100" /><path d="M0 5.500h11L13 3h15.500A1.500 1.500 0 0 1 30 4.500V27H0Z" fill="#fdcb43" /><path d="M5 22a2 2 0 0 1 2-2h16a2 2 0 0 1 2 2v5H5Z" fill="#1878c8" /><path d="M9 23.500h12" stroke="#0b4f8c" /></svg>
      <I className="ml-[415px] size-4"><path d="m2 14 8-8 8 8" strokeWidth="2" /></I>
      <I className="ml-[22px] size-[22px]"><path d="M1 8a13 13 0 0 1 18 0M3.800 11a9 9 0 0 1 12.400 0M6.500 13.700a5 5 0 0 1 7 0" strokeWidth="1.400" /><circle cx="10" cy="16.500" r="1.300" fill="currentColor" /></I>
      <I className="ml-2 size-5"><path d="M2 7.500h3L9.500 3.500v13L5 12.500H2ZM13 7.500l5.500 5.500M18.500 7.500 13 13" strokeWidth="1.300" /></I>
      <svg viewBox="0 0 20 14" className="ml-2.5 h-3.5 w-5"><rect x=".7" y=".7" width="16.600" height="12.600" rx="3" fill="none" stroke="#fff" strokeWidth="1.200" /><rect x="2.500" y="2.500" width="12" height="9" rx="1.500" fill="#fff" /><path d="M18.500 4.500v5" stroke="#fff" strokeWidth="2" /></svg>
      <div className="ml-5 flex w-[70px] flex-col items-end text-[14.5px] leading-5"><T className="w-[62px]">10:37 PM</T><T className="w-[69px]">4/24/2024</T></div>
      <svg viewBox="0 0 16 19" className="ml-[11px] h-[19px] w-4"><path d="M8 0a6 6 0 0 0-6 6v5L0 14.500V16h16v-1.500L14 11V6a6 6 0 0 0-6-6ZM5 17h6a3 3 0 0 1-6 0Z" fill="#62f3ff" /></svg>
      <div className="relative ml-[23px] h-[29px] w-[30px]">
        <svg viewBox="0 0 30 29" className="h-[29px] w-[30px]">
          <defs>
            <linearGradient id="ca" x1="0" y1="0" x2="0" y2="1"><stop offset="0" stopColor="#1aa6e8" /><stop offset=".5" stopColor="#3ec28b" /><stop offset="1" stopColor="#e8d72e" /></linearGradient>
            <linearGradient id="cb" x1="0" y1="0" x2="0" y2="1"><stop offset="0" stopColor="#b06af5" /><stop offset=".6" stopColor="#ee5f8e" /><stop offset="1" stopColor="#f98d4c" /></linearGradient>
          </defs>
          <path d="M7 0h12c2 0 3 2 4 7h-5c-2 0-3 1-4 4l-2 7H2c-2 0-2.500-2-2-4L3 4c.8-2.500 2-4 4-4Z" fill="url(#ca)" /><path d="M14 0h5c2 0 3 2 4 7h-5Z" fill="#1b50d8" />
          <path d="M18 7h9c2 0 2.500 1.500 2 4l-3 10H8c3 0 5-1 6-4l2-7c.5-2 1-3 2-3Z" fill="url(#cb)" />
        </svg>
        <div className="absolute bottom-0 left-[7px] flex h-[9px] w-[23px] items-center justify-center rounded-sm bg-[#ffc400] text-[8px] font-extrabold leading-none tracking-wide text-black">PRE</div>
      </div>
    </div>
  );
}

export default function App() {
  return (
    <div className="flex h-[1078px] w-[1918px] flex-col overflow-hidden bg-[#f4f4f4] font-['Open_Sans','Noto_Sans',sans-serif]">
      <BrowserTabs />
      <AddressBar />
      <SuiteHeader />
      <div className="flex min-h-0 flex-1">
        <Rail />
        <div className="flex min-w-0 flex-1 flex-col">
          <Ribbon />
          <div className="flex min-h-0 flex-1">
            <FolderPane />
            <MessageList />
            <Reading />
            <div className="flex w-[22px] flex-col items-center pl-1">
              <div className="mt-[75px] size-0 border-x-[3.5px] border-b-4 border-x-transparent border-b-[#808080]" />
              <div className="mt-3 h-[504px] w-2 rounded-full bg-[#808080]" />
              <div className="mb-[11px] mt-auto size-0 border-x-[3.5px] border-t-4 border-x-transparent border-t-[#808080]" />
            </div>
          </div>
        </div>
      </div>
      <Taskbar />
    </div>
  );
}
